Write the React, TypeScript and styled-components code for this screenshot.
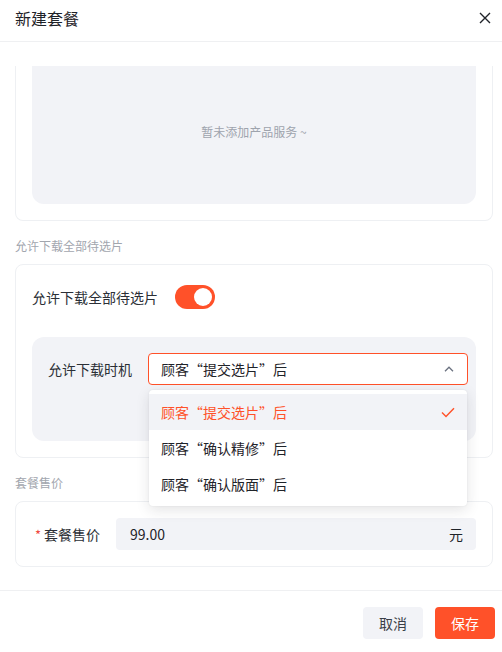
import styled, { createGlobalStyle } from 'styled-components';

const ORANGE = '#ff5129';

const GlobalStyle = createGlobalStyle`
    html, body {
        margin: 0;
        padding: 0;
        background: #fff;
    }
    body {
        font-family: "Noto Sans CJK SC", "Noto Sans", sans-serif;
        color: #1f2329;
        -webkit-font-smoothing: antialiased;
    }
`;

const Modal = styled.div`
    width: 502px;
    height: 652px;
    display: flex;
    flex-direction: column;
    background: #fff;
`;

const Header = styled.div`
    height: 41px;
    border-bottom: 1px solid #eff0f2;
    display: flex;
    align-items: center;
    justify-content: space-between;
    padding: 0 9px 0 15px;
    flex-shrink: 0;
`;

const Title = styled.div`
    font-size: 16px;
    line-height: 22px;
    color: #1f2329;
    margin-top: -5px;
`;

const CloseButton = styled.button`
    border: none;
    background: none;
    padding: 0;
    width: 16px;
    height: 16px;
    display: flex;
    align-items: center;
    justify-content: center;
    margin-top: -5px;
    cursor: pointer;
`;

const Body = styled.div`
    flex: 1;
    padding: 24px 9px 0 15px;
    overflow: hidden;
    display: flex;
    flex-direction: column;
`;

const Card = styled.div<{ $clipped?: boolean }>`
    border: 1px solid #eef0f3;
    border-radius: 8px;
    padding: 16px;
    ${(p) =>
        p.$clipped &&
        `
        border-top: none;
        border-top-left-radius: 0;
        border-top-right-radius: 0;
        padding-top: 0;
    `}
`;

const EmptyBox = styled.div`
    height: 138px;
    background: #f2f3f7;
    border-radius: 0 0 12px 12px;
    display: flex;
    align-items: center;
    justify-content: center;
    padding-bottom: 8px;
    box-sizing: border-box;
    font-size: 12px;
    color: #9ea3ad;
`;

const SectionLabel = styled.div`
    font-size: 12px;
    line-height: 18px;
    color: #a2a6ae;
    margin: 16px 0 9px;
`;

const FormRow = styled.div`
    display: flex;
    align-items: center;
    height: 32px;
`;

const RowLabel = styled.div<{ $width?: number; $align?: string }>`
    width: ${(p) => (p.$width ? `${p.$width}px` : 'auto')};
    flex-shrink: 0;
    font-size: 14px;
    color: #2b2f36;
    text-align: ${(p) => p.$align || 'left'};
    padding-right: 16px;
    box-sizing: border-box;
`;

const Required = styled.span`
    color: #f0483e;
    margin-right: 3px;
    font-size: 13px;
`;

const Switch = styled.div<{ $on: boolean }>`
    width: 40px;
    height: 24px;
    border-radius: 12px;
    background: ${(p) => (p.$on ? ORANGE : '#c9cdd4')};
    display: flex;
    align-items: center;
    justify-content: ${(p) => (p.$on ? 'flex-end' : 'flex-start')};
    padding: 0 3px;
    box-sizing: border-box;
    margin-left: 1px;
`;

const Knob = styled.div`
    width: 18px;
    height: 18px;
    border-radius: 50%;
    background: #fff;
`;

const SubPanel = styled.div`
    margin-top: 24px;
    background: #f2f3f7;
    border-radius: 12px;
    padding: 16px 8px 56px 16px;
`;

const SelectWrap = styled.div`
    position: relative;
    flex: 1;
`;

const SelectBox = styled.div`
    height: 32px;
    border: 1px solid ${ORANGE};
    border-radius: 4px;
    background: #fff;
    display: flex;
    align-items: center;
    justify-content: space-between;
    padding: 0 13px 0 12px;
    box-sizing: border-box;
    font-size: 14px;
    color: #1f2329;
`;

const Dropdown = styled.div`
    position: absolute;
    top: 37px;
    left: 1px;
    right: 1px;
    background: #fff;
    border-radius: 4px;
    box-shadow: 0 4px 14px rgba(31, 35, 41, 0.12), 0 0 2px rgba(31, 35, 41, 0.08);
    padding: 4px 0;
    z-index: 10;
`;

const Option = styled.div<{ $active?: boolean }>`
    height: 36px;
    display: flex;
    align-items: center;
    justify-content: space-between;
    padding: 0 12px 0 12px;
    font-size: 14px;
    color: ${(p) => (p.$active ? ORANGE : '#1f2329')};
    background: ${(p) => (p.$active ? '#f2f3f7' : '#fff')};
`;

const PriceInput = styled.div`
    flex: 1;
    height: 32px;
    background: #f2f3f7;
    border-radius: 4px;
    display: flex;
    align-items: center;
    justify-content: space-between;
    padding: 0 13px 0 14px;
    font-size: 14px;
    color: #1f2329;
`;

const Footer = styled.div`
    flex-shrink: 0;
    border-top: 1px solid #eff0f2;
    padding: 16px 7px 13px 0;
    display: flex;
    justify-content: flex-end;
    gap: 12px;
`;

const Button = styled.button<{ $primary?: boolean }>`
    height: 32px;
    width: 60px;
    border: none;
    border-radius: 4px;
    font-family: inherit;
    font-size: 14px;
    background: ${(p) => (p.$primary ? ORANGE : '#f2f3f7')};
    color: ${(p) => (p.$primary ? '#fff' : '#3a3f47')};
    cursor: pointer;
`;

const options = ['顾客“提交选片”后', '顾客“确认精修”后', '顾客“确认版面”后'];

export default function App() {
    return (
        <Modal lang="zh-CN">
            <GlobalStyle />
            <Header>
                <Title>新建套餐</Title>
                <CloseButton aria-label="关闭">
                    <svg width="12" height="12" viewBox="0 0 12 12">
                        <path d="M1 1L11 11M11 1L1 11" stroke="#1f2329" strokeWidth="1.4" />
                    </svg>
                </CloseButton>
            </Header>
            <Body>
                <Card $clipped>
                    <EmptyBox>暂未添加产品服务 ~</EmptyBox>
                </Card>

                <SectionLabel>允许下载全部待选片</SectionLabel>
                <Card>
                    <FormRow>
                        <RowLabel>允许下载全部待选片</RowLabel>
                        <Switch $on>
                            <Knob />
                        </Switch>
                    </FormRow>
                    <SubPanel>
                        <FormRow>
                            <RowLabel $width={100}>允许下载时机</RowLabel>
                            <SelectWrap>
                                <SelectBox>
                                    <span>{options[0]}</span>
                                    <svg width="10" height="6" viewBox="0 0 10 6">
                                        <path d="M1 5.2L5 1.2L9 5.2" fill="none" stroke="#6b7280" strokeWidth="1.3" />
                                    </svg>
                                </SelectBox>
                                <Dropdown>
                                    {options.map((o, i) => (
                                        <Option key={o} $active={i === 0}>
                                            <span>{o}</span>
                                            {i === 0 && (
                                                <svg width="14" height="11" viewBox="0 0 14 11">
                                                    <path d="M1 5.5L5 9.5L13 1.2" fill="none" stroke={ORANGE} strokeWidth="1.4" />
                                                </svg>
                                            )}
                                        </Option>
                                    ))}
                                </Dropdown>
                            </SelectWrap>
                        </FormRow>
                    </SubPanel>
                </Card>

                <SectionLabel>套餐售价</SectionLabel>
                <Card>
                    <FormRow>
                        <RowLabel $width={84} $align="right">
                            <Required>*</Required>套餐售价
                        </RowLabel>
                        <PriceInput>
                            <span>99.00</span>
                            <span>元</span>
                        </PriceInput>
                    </FormRow>
                </Card>
            </Body>
            <Footer>
                <Button>取消</Button>
                <Button $primary>保存</Button>
            </Footer>
        </Modal>
    );
}
